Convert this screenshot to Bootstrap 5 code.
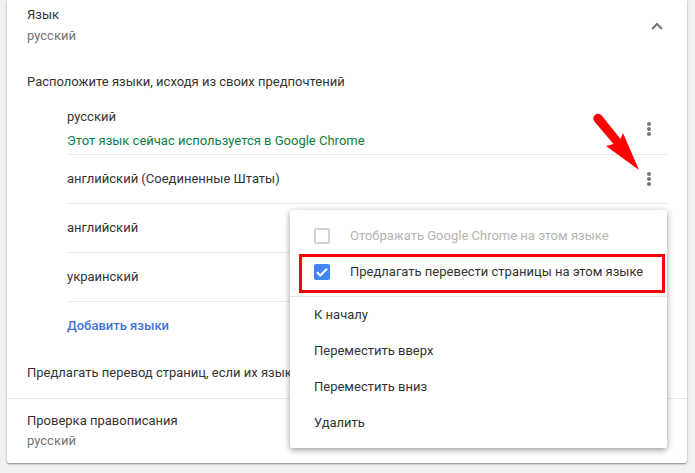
<!DOCTYPE html>
<html lang="ru"><head><meta charset="utf-8">
<title>Язык</title>
<link href="https://cdn.jsdelivr.net/npm/bootstrap@5.3.0/dist/css/bootstrap.min.css" rel="stylesheet">
<style>
html,body{height:473px;overflow:hidden}
body{background:#f1f1f1;font-family:Roboto,"Liberation Sans",sans-serif;font-size:13px;color:#333;line-height:20px}
.sheet{width:680px;height:463px;margin:0 0 0 7px;background:#fff;border-radius:0 0 3px 3px;box-shadow:0 1px 2px rgba(0,0,0,.45);position:relative}
.pad-x{padding-left:20px;padding-right:20px}
.muted-t{color:#757575}
.head-row{height:56px;padding-top:5px}
.sub-line{margin-top:1px}
.intro{padding-top:16px;padding-bottom:12px;box-sizing:content-box;height:20px}
.langs{margin-left:60px;margin-right:20px}
.lang-row{height:49px;border-bottom:1px solid #e8e8e8}
.lang-first{height:51px}
.lang-first .two{line-height:24px}
.green-t{color:#0b8043}
.add-row{height:48px;color:#4272db;font-weight:500}
.offer{height:49px;border-bottom:1px solid #e8e8e8;padding-top:13px}
.spell{padding-top:12px}
.dots{width:4px;display:flex;flex-direction:column;gap:1px;margin-right:16px}
.dots i{display:block;width:4px;height:4px;border-radius:50%;background:#757575}
.popup{position:absolute;left:283px;top:210px;width:377px;height:238px;background:#fff;border-radius:2px;box-shadow:0 2px 6px rgba(0,0,0,.4);padding-top:8px}
.pop-row{height:36px;padding-left:24px}
.pop-rule{border-bottom:1px solid #e8e8e8;height:43px;padding-bottom:6px}
.box{width:16px;height:16px;border-radius:2px;margin-right:20px;flex:none;display:flex}
.box-off{border:2px solid #d4d4d4}
.box-on{background:#4285f4}
.off-t{color:#b4b4b4}
.redbox{position:absolute;left:292px;top:254px;width:366px;height:39px;border:3px solid #f00}
.pointer{position:absolute;left:586px;top:113px}
.chev{position:absolute;left:643px;top:21px}
</style></head>
<body>
<div class="sheet">
  <div class="head-row pad-x"><div>Язык</div><div class="muted-t sub-line">русский</div></div>
  <div class="pad-x intro">Расположите языки, исходя из своих предпочтений</div>
  <div class="langs">
    <div class="lang-row lang-first d-flex align-items-center justify-content-between">
      <div class="two"><div>русский</div><div class="green-t">Этот язык сейчас используется в Google Chrome</div></div>
      <div class="dots"><i></i><i></i><i></i></div>
    </div>
    <div class="lang-row d-flex align-items-center justify-content-between"><div>английский (Соединенные Штаты)</div><div class="dots"><i></i><i></i><i></i></div></div>
    <div class="lang-row d-flex align-items-center"><div>английский</div></div>
    <div class="lang-row d-flex align-items-center"><div>украинский</div></div>
    <div class="add-row d-flex align-items-center">Добавить языки</div>
  </div>
  <div class="offer pad-x">Предлагать перевод страниц, если их язык</div>
  <div class="spell pad-x"><div>Проверка правописания</div><div class="muted-t">русский</div></div>
  <svg class="chev" width="14" height="10" viewBox="0 0 14 10"><path d="M2 8L7 3 12 8" fill="none" stroke="#757575" stroke-width="2"/></svg>
  <div class="popup">
    <div class="pop-row d-flex align-items-center off-t"><span class="box box-off"></span>Отображать Google Chrome на этом языке</div>
    <div class="pop-row pop-rule d-flex align-items-center"><span class="box box-on"><svg width="16" height="16" viewBox="0 0 16 16"><path d="M3 8.3l3.3 3.2L13 4.8" fill="none" stroke="#fff" stroke-width="2"/></svg></span>Предлагать перевести страницы на этом языке</div>
    <div class="pop-row d-flex align-items-center">К началу</div>
    <div class="pop-row d-flex align-items-center">Переместить вверх</div>
    <div class="pop-row d-flex align-items-center">Переместить вниз</div>
    <div class="pop-row d-flex align-items-center">Удалить</div>
  </div>
  <div class="redbox"></div>
  <svg class="pointer" width="60" height="60" viewBox="0 0 60 60"><path d="M1.5 2.5C3.5 0.2 6.5 0.3 8.5 2.3L27.5 26 30 20 46 57 13 33 20.5 31 1 8C0 6 0 4 1.5 2.5Z" fill="#f00"/></svg>
</div>
<script src="https://cdn.jsdelivr.net/npm/bootstrap@5.3.0/dist/js/bootstrap.bundle.min.js"></script>
</body></html>
